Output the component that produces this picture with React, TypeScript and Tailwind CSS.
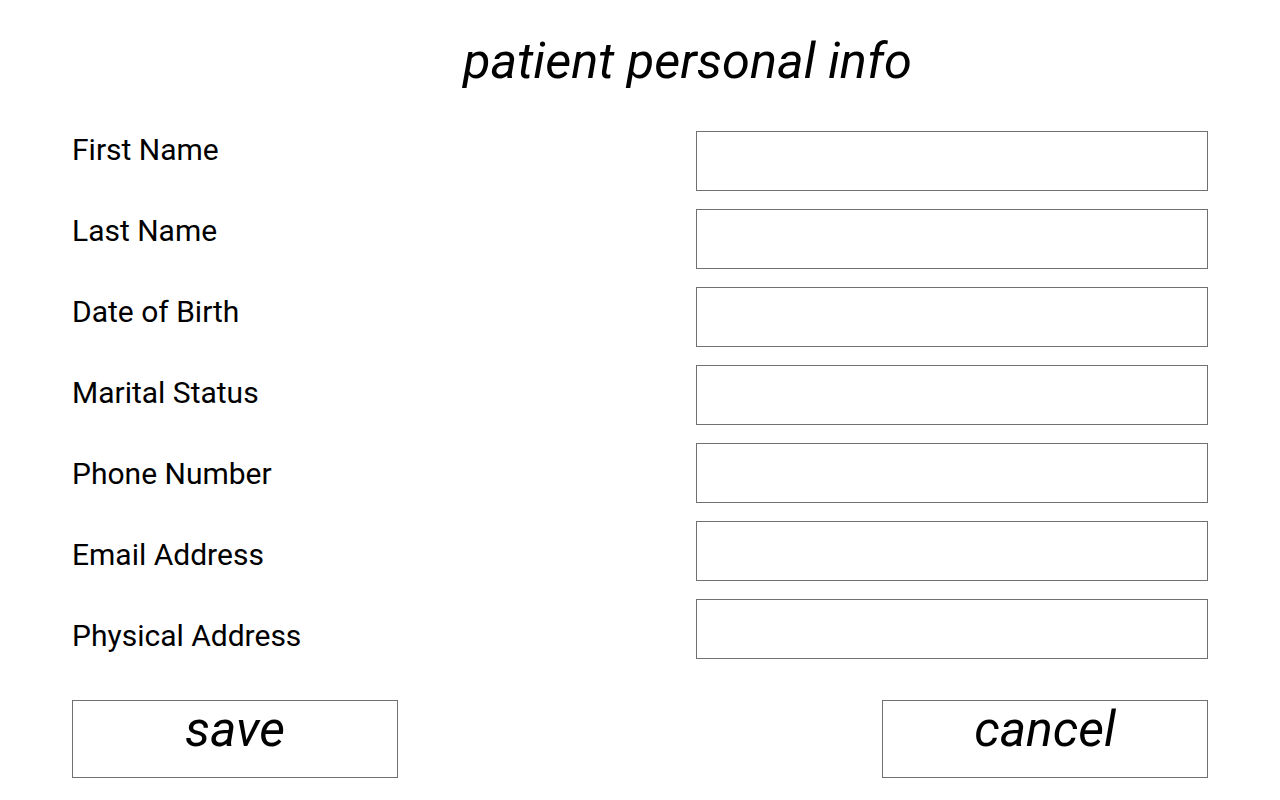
const labels = [
  'First Name',
  'Last Name',
  'Date of Birth',
  'Marital Status',
  'Phone Number',
  'Email Address',
  'Physical Address',
];

export default function App() {
  return (
    <div className="w-[1280px] h-[800px] bg-white text-black font-['Roboto',sans-serif] overflow-hidden">
      <div className="pt-[31px] pl-[95px] text-center">
        <h1 className="text-[50.5px] leading-[60px] italic font-normal">patient personal info</h1>
      </div>

      <div className="flex justify-between px-[72px]">
        <div className="flex flex-col pt-[18px]">
          {labels.map((label) => (
            <div key={label} className="h-[81px] leading-[81px] text-[30px]">
              {label}
            </div>
          ))}
        </div>
        <div className="flex flex-col gap-[18px] pt-[40px]">
          {labels.map((label) => (
            <input
              key={label}
              type="text"
              className="w-[512px] h-[60px] border border-[#707070] bg-white outline-none px-3 text-[24px]"
            />
          ))}
        </div>
      </div>

      <div className="flex justify-between px-[72px] mt-[24px]">
        <button className="w-[326px] h-[78px] border border-[#707070] bg-white flex justify-center items-start">
          <span className="text-[50px] leading-[56px] italic">save</span>
        </button>
        <button className="w-[326px] h-[78px] border border-[#707070] bg-white flex justify-center items-start">
          <span className="text-[50px] leading-[56px] italic">cancel</span>
        </button>
      </div>
    </div>
  );
}
